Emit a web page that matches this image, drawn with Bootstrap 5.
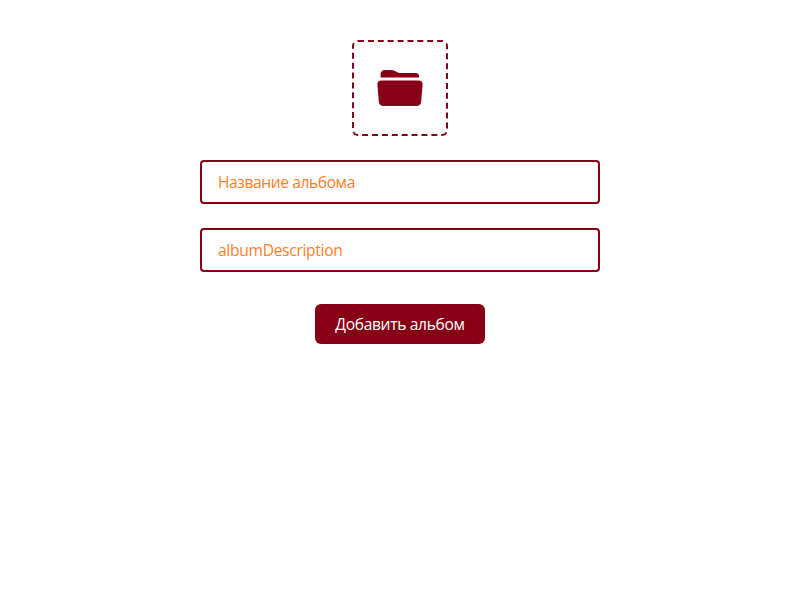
<!DOCTYPE html>
<html lang="ru">
<head>
<meta charset="utf-8">
<meta name="viewport" content="width=device-width, initial-scale=1">
<title>Добавить альбом</title>
<link href="https://cdn.jsdelivr.net/npm/bootstrap@5.3.0/dist/css/bootstrap.min.css" rel="stylesheet">
<style>
body{font-family:"Segoe UI","Open Sans","Noto Sans",sans-serif;--wine:#880015}
.album-form{width:400px;padding-top:40px}
.cover-drop{width:96px;height:96px;border:2px dashed var(--wine);border-radius:6px;color:var(--wine);cursor:pointer}
.album-form .form-control{height:44px;border:2px solid var(--wine);border-radius:4px;padding:8px 16px;font-size:15.6px;line-height:24px;letter-spacing:-.41px}
.album-form .form-control.latin{letter-spacing:-.3px}
.album-form .form-control::placeholder{color:#ff7f27;opacity:1}
.album-form .btn-wine{width:170px;height:40px;background:var(--wine);color:#fff;border:0;border-radius:6px;font-size:15.6px;line-height:24px;letter-spacing:-.33px;white-space:nowrap}
.album-form .btn-wine:hover{background:#6b0010;color:#fff}
</style>
</head>
<body>
<form class="album-form mx-auto d-flex flex-column align-items-center gap-4">
<label class="cover-drop d-flex align-items-center justify-content-center">
<svg width="48" height="48" viewBox="0 0 48 48" fill="currentColor" aria-hidden="true"><path d="M4.600 13.400V10.500Q4.600 6 9 6H15.500C19.500 6 20.500 9 24 9H39.500Q43.200 9 43.200 13.400Z"/><path d="M5.500 16.400H42.500Q46.900 16.400 46.600 20.800L45.200 37.600Q44.800 42 40.500 42H7.500Q3.200 42 2.800 37.600L1.400 20.800Q1.100 16.400 5.500 16.400Z"/></svg>
</label>
<input class="form-control" type="text" placeholder="Название альбома">
<input class="form-control latin" type="text" placeholder="albumDescription">
<button class="btn btn-wine mt-2 p-0" type="button">Добавить альбом</button>
</form>
<script src="https://cdn.jsdelivr.net/npm/bootstrap@5.3.0/dist/js/bootstrap.bundle.min.js"></script>
</body>
</html>
